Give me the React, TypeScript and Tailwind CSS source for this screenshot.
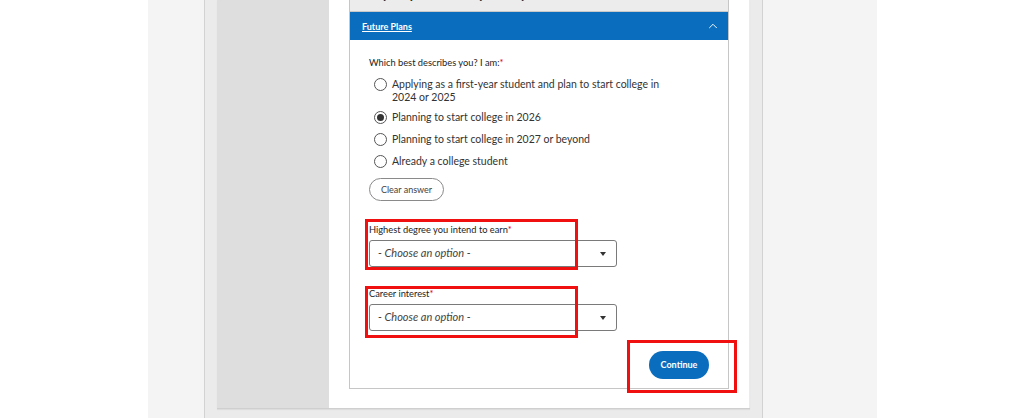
import {ChevronUp} from 'lucide-react';

const options = [
  {label: 'Applying as a first-year student and plan to start college in 2024 or 2025', checked: false},
  {label: 'Planning to start college in 2026', checked: true},
  {label: 'Planning to start college in 2027 or beyond', checked: false},
  {label: 'Already a college student', checked: false},
];

function Radio({checked}: {checked: boolean}) {
  return (
    <span className="flex h-[13px] w-[13px] shrink-0 items-center justify-center rounded-full border border-[#555] bg-white">
      {checked && <span className="h-[7px] w-[7px] rounded-full bg-[#333]" />}
    </span>
  );
}

function SelectField({label}: {label: string}) {
  return (
    <div>
      <p className="text-[9.3px] leading-[12px] text-[#222]">
        {label}
        <span className="text-[#e0001b]">*</span>
      </p>
      <div className="mt-[4px] flex h-[27px] w-[248px] items-center justify-between rounded-[3px] border border-[#7a7a7a] bg-white pl-[8px] pr-[10px]">
        <span className="text-[11px] italic text-[#444]">- Choose an option -</span>
        <span className="h-0 w-0 border-x-[3.5px] border-t-[4px] border-x-transparent border-t-[#333]" />
      </div>
    </div>
  );
}

export default function App() {
  return (
    <div className="flex h-[418px] w-full justify-center overflow-hidden bg-white font-['Lato',sans-serif]">
      <div className="flex h-full w-[729px] bg-[#f4f4f4] pl-[56px]">
        <div className="h-full w-[559px] border-x border-[#d2d2d2] bg-[#ebebeb] pl-[12px] pr-[12px]">
          <div className="flex h-[409px] border-b border-[#cfcfcf] shadow-[0_1px_1px_rgba(0,0,0,0.06)]">
            <div className="w-[112px] bg-[#dedede]" />
            <div className="w-[420px] bg-white px-[20px]">
              <div className="flex h-[389px] flex-col border-x border-b border-[#c6c6c6]">
                {/* previous step header, scrolled mostly out of view */}
                <div className="h-[12px] shrink-0 overflow-hidden border-b border-[#c9c9c9] bg-[#ececec]">
                  <p className="mt-[-14px] pl-[13px] text-[13px] font-bold leading-[16px] text-[#333]">
                    Help us personalize your experience
                  </p>
                </div>
                <div className="flex h-[28px] shrink-0 items-center justify-between bg-[#0b6dbd] pl-[12px] pr-[8px]">
                  <span className="mt-[1px] text-[9px] font-bold text-white underline">Future Plans</span>
                  <ChevronUp size={14} strokeWidth={1.6} className="text-white" />
                </div>
                <div className="flex flex-1 flex-col px-[19px] pt-[17px]">
                  <p className="text-[9.3px] leading-[12px] text-[#222]">
                    Which best describes you? I am:<span className="text-[#e0001b]">*</span>
                  </p>
                  <div className="mt-[9px] flex flex-col gap-[8px] pl-[5px]">
                    {options.map((o) => (
                      <label key={o.label} className="flex min-h-[14px] items-start gap-[5px]">
                        <Radio checked={o.checked} />
                        <span className="max-w-[280px] text-[10.5px] leading-[12.5px] text-[#333]">{o.label}</span>
                      </label>
                    ))}
                  </div>
                  <button className="mt-[9px] flex h-[23px] w-[75px] shrink-0 items-center justify-center rounded-full border border-[#8a8a8a] text-[9px] text-[#444]">
                    Clear answer
                  </button>
                  <div className="mt-[23px]">
                    <SelectField label="Highest degree you intend to earn" />
                  </div>
                  <div className="mt-[21px]">
                    <SelectField label="Career interest" />
                  </div>
                  <div className="mt-[20px] flex justify-end">
                    <button className="h-[28px] w-[60px] rounded-full bg-[#0b6dbd] text-[9px] font-bold text-white">
                      Continue
                    </button>
                  </div>
                </div>
              </div>
            </div>
          </div>
        </div>
      </div>
      {/* annotation boxes */}
      <div className="pointer-events-none absolute left-[365px] top-[219px] h-[51px] w-[213px] border-[3px] border-[#f01010]" />
      <div className="pointer-events-none absolute left-[365px] top-[286px] h-[52px] w-[213px] border-[3px] border-[#f01010]" />
      <div className="pointer-events-none absolute left-[627px] top-[340px] h-[53px] w-[110px] border-[3px] border-[#f01010]" />
    </div>
  );
}
